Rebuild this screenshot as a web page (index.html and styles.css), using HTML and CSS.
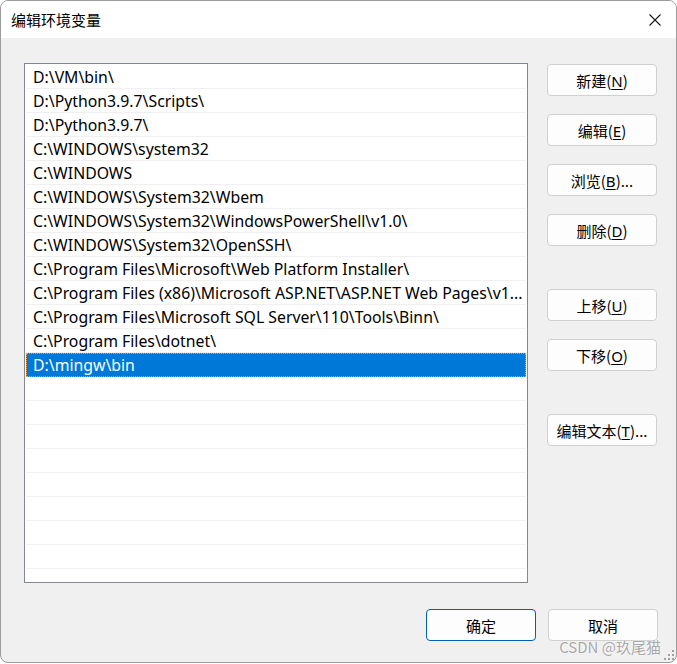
FILE: index.html
```html
<!DOCTYPE html>
<html lang="zh-CN">
<head>
    <meta charset="UTF-8">
    <meta name="viewport" content="width=device-width, initial-scale=1.0">
    <title>编辑环境变量</title>
    <link rel="stylesheet" href="styles.css">
</head>
<body>
    <div class="window">
        <div class="titlebar">
            <span class="title">编辑环境变量</span>
            <svg class="close" width="12" height="12" viewBox="0 0 12 12">
                <path d="M0.5 0.5 L11.5 11.5 M11.5 0.5 L0.5 11.5" stroke="#1a1a1a" stroke-width="1.1" fill="none"/>
            </svg>
        </div>

        <div class="main">
            <div class="list">
                <div class="row">D:\VM\bin\</div>
                <div class="row">D:\Python3.9.7\Scripts\</div>
                <div class="row">D:\Python3.9.7\</div>
                <div class="row">C:\WINDOWS\system32</div>
                <div class="row">C:\WINDOWS</div>
                <div class="row">C:\WINDOWS\System32\Wbem</div>
                <div class="row">C:\WINDOWS\System32\WindowsPowerShell\v1.0\</div>
                <div class="row">C:\WINDOWS\System32\OpenSSH\</div>
                <div class="row">C:\Program Files\Microsoft\Web Platform Installer\</div>
                <div class="row">C:\Program Files (x86)\Microsoft ASP.NET\ASP.NET Web Pages\v1...</div>
                <div class="row">C:\Program Files\Microsoft SQL Server\110\Tools\Binn\</div>
                <div class="row">C:\Program Files\dotnet\</div>
                <div class="row selected">D:\mingw\bin</div>
                <div class="row"></div>
                <div class="row"></div>
                <div class="row"></div>
                <div class="row"></div>
                <div class="row"></div>
                <div class="row"></div>
                <div class="row"></div>
                <div class="row"></div>
            </div>

            <div class="actions">
                <button class="btn">新建(<u>N</u>)</button>
                <button class="btn">编辑(<u>E</u>)</button>
                <button class="btn">浏览(<u>B</u>)...</button>
                <button class="btn">删除(<u>D</u>)</button>
                <button class="btn spaced">上移(<u>U</u>)</button>
                <button class="btn">下移(<u>O</u>)</button>
                <button class="btn spaced">编辑文本(<u>T</u>)...</button>
            </div>
        </div>

        <div class="footer">
            <button class="btn default">确定</button>
            <button class="btn">取消</button>
        </div>

        <div class="watermark">CSDN @玖尾猫</div>
        <svg class="grip" width="10" height="10" viewBox="0 0 10 10">
            <rect x="8" y="0" width="2" height="2" fill="#a0a0a0"/>
            <rect x="4" y="4" width="2" height="2" fill="#a0a0a0"/>
            <rect x="8" y="4" width="2" height="2" fill="#a0a0a0"/>
            <rect x="0" y="8" width="2" height="2" fill="#a0a0a0"/>
            <rect x="4" y="8" width="2" height="2" fill="#a0a0a0"/>
            <rect x="8" y="8" width="2" height="2" fill="#a0a0a0"/>
        </svg>
    </div>
</body>
</html>
```

FILE: styles.css
```css
* {
    margin: 0;
    padding: 0;
    box-sizing: border-box;
    font-family: 'Noto Sans', 'Noto Sans CJK SC', sans-serif;
}

body {
    background: #ffffff;
    width: 677px;
    height: 664px;
    overflow: hidden;
}

.window {
    position: relative;
    width: 677px;
    height: 663px;
    background: #f0f0f0;
    border: 1px solid #9c9c9c;
    border-radius: 8px;
    overflow: hidden;
}

.titlebar {
    height: 37px;
    background: #ffffff;
    display: flex;
    align-items: center;
    justify-content: space-between;
    padding: 0 15px 0 10px;
}

.title {
    font-size: 15px;
    color: #000;
    font-family: 'Noto Sans CJK SC', sans-serif;
}

.close {
    display: block;
}

.main {
    display: flex;
    gap: 19px;
    padding: 25px 0 0 23px;
}

.list {
    width: 504px;
    height: 520px;
    background: #ffffff;
    border: 1px solid #828790;
    padding: 1px;
    overflow: hidden;
}

.row {
    height: 24px;
    line-height: 25px;
    padding-left: 7px;
    border-bottom: 1px solid #f0f0f0;
    font-size: 15.8px;
    color: #000;
    white-space: nowrap;
    overflow: hidden;
}

.row.selected {
    background: #0078d7;
    color: #ffffff;
    border-bottom-color: #0078d7;
    outline: 1px dotted #f0a040;
    outline-offset: -1px;
}

.actions {
    width: 110px;
    display: flex;
    flex-direction: column;
    gap: 18px;
    padding-top: 1px;
}

.actions .spaced {
    margin-top: 25px;
}

.btn {
    width: 110px;
    height: 32px;
    background: #fdfdfd;
    border: 1px solid #d0d0d0;
    border-radius: 4px;
    font-size: 15px;
    color: #000;
    font-family: 'Noto Sans CJK SC', sans-serif;
}

.btn u {
    text-underline-offset: 2px;
}

.btn.default {
    border-color: #005fb8;
}

.footer {
    display: flex;
    justify-content: flex-end;
    gap: 12px;
    padding: 26px 18px 0 0;
}

.watermark {
    position: absolute;
    right: 15px;
    bottom: 5px;
    font-size: 15px;
    color: #a8a8a8;
    font-family: 'Noto Sans CJK SC', sans-serif;
    text-shadow: 0 0 2px #ffffff, 0 0 1px #ffffff;
}

.grip {
    position: absolute;
    right: 2px;
    bottom: 2px;
}
```
